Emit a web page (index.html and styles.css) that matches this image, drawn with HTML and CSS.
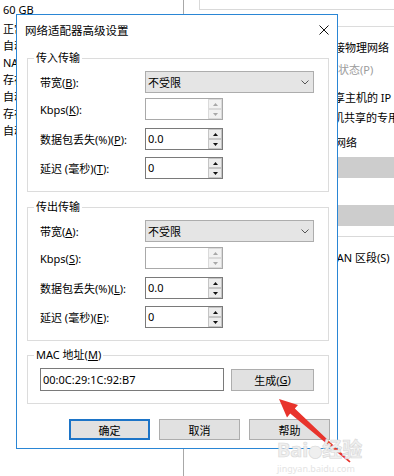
FILE: index.html
```html
<!DOCTYPE html>
<html lang="zh-CN">
<head>
    <meta charset="UTF-8">
    <title>网络适配器高级设置</title>
    <link rel="stylesheet" href="styles.css">
</head>
<body>
<div class="desk">
    <!-- 背后的虚拟机设置窗口 -->
    <div class="side-list">
        <div class="first">60 GB</div>
        <div>正常</div>
        <div>自动</div>
        <div>NAT</div>
        <div>存在</div>
        <div>自动</div>
        <div>存在</div>
        <div>自动</div>
    </div>
    <div class="split"></div>
    <div class="pane">
        <div class="pane-top"></div>
        <div class="pane-box">
            <div class="l1">连接物理网络</div>
            <div class="l2">连接状态(P)</div>
            <div class="l3">共享主机的 IP</div>
            <div class="l4">主机共享的专用</div>
            <div class="l5">虚拟网络</div>
            <div class="bar"></div>
            <div class="bar bar2"></div>
            <div class="pane-line"></div>
            <div class="lan">LAN 区段(S)</div>
        </div>
    </div>

    <!-- 对话框 -->
    <div class="dialog">
        <div class="titlebar">
            <span class="title">网络适配器高级设置</span>
            <svg class="close" width="10" height="10" viewBox="0 0 10 10"><path d="M0.5 0.5L9.5 9.5M9.5 0.5L0.5 9.5"/></svg>
        </div>
        <div class="dialog-body">
            <div class="group">
                <span class="group-title">传入传输</span>
                <div class="row">
                    <span class="label">带宽(<u>B</u>):</span>
                    <div class="combo"><span>不受限</span><svg width="8" height="5" viewBox="0 0 8 5"><path d="M0.5 0.5L4 4L7.5 0.5"/></svg></div>
                </div>
                <div class="row row-2">
                    <span class="label">Kbps(<u>K</u>):</span>
                    <div class="spin off">
                        <span class="spin-val"></span>
                        <span class="spin-btns">
                            <span class="spin-btn"><svg width="5" height="3" viewBox="0 0 5 3"><path d="M0 3L2.5 0L5 3z"/></svg></span>
                            <span class="spin-btn"><svg width="5" height="3" viewBox="0 0 5 3"><path d="M0 0L5 0L2.5 3z"/></svg></span>
                        </span>
                    </div>
                </div>
                <div class="row row-3">
                    <span class="label">数据包丢失(%)(<u>P</u>):</span>
                    <div class="spin">
                        <span class="spin-val">0.0</span>
                        <span class="spin-btns">
                            <span class="spin-btn"><svg width="5" height="3" viewBox="0 0 5 3"><path d="M0 3L2.5 0L5 3z"/></svg></span>
                            <span class="spin-btn"><svg width="5" height="3" viewBox="0 0 5 3"><path d="M0 0L5 0L2.5 3z"/></svg></span>
                        </span>
                    </div>
                </div>
                <div class="row row-4">
                    <span class="label">延迟 (毫秒)(<u>T</u>):</span>
                    <div class="spin">
                        <span class="spin-val">0</span>
                        <span class="spin-btns">
                            <span class="spin-btn"><svg width="5" height="3" viewBox="0 0 5 3"><path d="M0 3L2.5 0L5 3z"/></svg></span>
                            <span class="spin-btn"><svg width="5" height="3" viewBox="0 0 5 3"><path d="M0 0L5 0L2.5 3z"/></svg></span>
                        </span>
                    </div>
                </div>
            </div>

            <div class="group group-out">
                <span class="group-title">传出传输</span>
                <div class="row">
                    <span class="label">带宽(<u>A</u>):</span>
                    <div class="combo"><span>不受限</span><svg width="8" height="5" viewBox="0 0 8 5"><path d="M0.5 0.5L4 4L7.5 0.5"/></svg></div>
                </div>
                <div class="row row-2">
                    <span class="label">Kbps(<u>S</u>):</span>
                    <div class="spin off">
                        <span class="spin-val"></span>
                        <span class="spin-btns">
                            <span class="spin-btn"><svg width="5" height="3" viewBox="0 0 5 3"><path d="M0 3L2.5 0L5 3z"/></svg></span>
                            <span class="spin-btn"><svg width="5" height="3" viewBox="0 0 5 3"><path d="M0 0L5 0L2.5 3z"/></svg></span>
                        </span>
                    </div>
                </div>
                <div class="row row-3">
                    <span class="label">数据包丢失(%)(<u>L</u>):</span>
                    <div class="spin">
                        <span class="spin-val">0.0</span>
                        <span class="spin-btns">
                            <span class="spin-btn"><svg width="5" height="3" viewBox="0 0 5 3"><path d="M0 3L2.5 0L5 3z"/></svg></span>
                            <span class="spin-btn"><svg width="5" height="3" viewBox="0 0 5 3"><path d="M0 0L5 0L2.5 3z"/></svg></span>
                        </span>
                    </div>
                </div>
                <div class="row row-4">
                    <span class="label">延迟 (毫秒)(<u>E</u>):</span>
                    <div class="spin">
                        <span class="spin-val">0</span>
                        <span class="spin-btns">
                            <span class="spin-btn"><svg width="5" height="3" viewBox="0 0 5 3"><path d="M0 3L2.5 0L5 3z"/></svg></span>
                            <span class="spin-btn"><svg width="5" height="3" viewBox="0 0 5 3"><path d="M0 0L5 0L2.5 3z"/></svg></span>
                        </span>
                    </div>
                </div>
            </div>

            <div class="group group-mac">
                <span class="group-title">MAC 地址(<u>M</u>)</span>
                <div class="mac-row">
                    <div class="mac-box">00:0C:29:1C:92:B7</div>
                    <div class="btn btn-gen">生成(<u>G</u>)</div>
                </div>
            </div>

            <div class="actions">
                <div class="btn btn-default">确定</div>
                <div class="btn">取消</div>
                <div class="btn">帮助</div>
            </div>
        </div>
    </div>

    <!-- 红色箭头 -->
    <svg class="arrow" width="394" height="476" viewBox="0 0 394 476">
        <polygon points="279,399 298,405 294.8,408.4 350.6,461.4 349.4,462.6 290.2,413.6 287,417.5"/>
    </svg>
    <div class="watermark">
        <div class="wm-big">Bai<span class="wm-paw">●</span>经验</div>
        <div class="wm-small">jingyan.baidu.com</div>
    </div>
</div>
</body>
</html>
```

FILE: styles.css
```css
*{
    margin:0;
    padding:0;
    box-sizing:border-box;
}
body{
    width:394px;
    height:476px;
    overflow:hidden;
    background:#fff;
    font-family:"Noto Sans","Noto Sans CJK SC",sans-serif;
    font-size:11px;
    color:#000;
}
u{
    text-decoration:underline;
    text-underline-offset:1px;
}
.desk{
    position:relative;
    width:394px;
    height:476px;
    overflow:hidden;
}

/* 背后的窗口 */
.side-list{
    position:absolute;
    left:3px;
    top:1px;
    line-height:17px;
    white-space:nowrap;
}
.side-list .first{
    margin-bottom:2px;
}
.split{
    position:absolute;
    left:183px;
    top:0;
    width:1px;
    height:476px;
    background:#a8a8a8;
}
.pane{
    position:absolute;
    left:199px;
    top:0;
    width:195px;
    height:476px;
    overflow:hidden;
}
.pane-top{
    height:10px;
    border-left:1px solid #d9d9d9;
    border-bottom:1px solid #d9d9d9;
}
.pane-box{
    margin-top:16px;
    border-top:1px solid #dcdcdc;
    padding-top:11px;
    line-height:20px;
    white-space:nowrap;
}
.l1{padding-left:124px;}
.l2{margin-top:2px;padding-left:117px;color:#9c9c9c;}
.l3{margin-top:8px;padding-left:124px;}
.l4{padding-left:123px;}
.l5{margin-top:5px;padding-left:114px;}
.bar{
    margin-top:4px;
    margin-left:100px;
    height:21px;
    background:#cdcdcd;
}
.bar2{margin-top:27px;}
.pane-line{
    margin-top:10px;
    margin-left:100px;
    height:1px;
    background:#d9d9d9;
}
.lan{margin-top:11px;padding-left:132px;}

/* 对话框 */
.dialog{
    position:absolute;
    left:16px;
    top:14px;
    width:322px;
    height:435px;
    border:1px solid #2a86d5;
    background:#fff;
    display:flex;
    flex-direction:column;
}
.titlebar{
    height:29px;
    display:flex;
    align-items:center;
    justify-content:space-between;
    padding:0 8px;
}
.title{
    font-size:11.5px;
}
.close path{
    stroke:#111;
    stroke-width:1;
    fill:none;
}
.dialog-body{
    padding:14px 8px 8px 10px;
    display:flex;
    flex-direction:column;
}
.group{
    position:relative;
    border:1px solid #dcdcdc;
    padding:12px 0 12px 12px;
}
.group-out{margin-top:15px;}
.group-mac{margin-top:14px;}
.group-title{
    position:absolute;
    top:-9px;
    left:6px;
    padding:0 2px;
    background:#fff;
    line-height:16px;
    white-space:nowrap;
}
.row{
    display:flex;
    align-items:center;
    height:22px;
}
.row-2{margin-top:5px;}
.row-3{margin-top:8px;}
.row-4{margin-top:7px;}
.label{
    width:105px;
    white-space:nowrap;
}
.combo{
    width:169px;
    height:22px;
    border:1px solid #adadad;
    background:#e5e5e5;
    display:flex;
    align-items:center;
    justify-content:space-between;
    padding:0 4px 0 2px;
}
.combo path{
    stroke:#555;
    stroke-width:1;
    fill:none;
}
.spin{
    width:78px;
    height:22px;
    border:1px solid #7a7a7a;
    display:flex;
    background:#fff;
}
.spin-val{
    flex:1;
    padding-left:2px;
    line-height:20px;
}
.spin-btns{
    width:14px;
    display:flex;
    flex-direction:column;
}
.spin-btn{
    flex:1;
    border:1px solid #c4c4c4;
    background:#ececec;
    display:flex;
    align-items:center;
    justify-content:center;
}
.spin-btn svg{
    fill:#111;
}
.spin.off{
    border-color:#a9a9a9;
}
.spin.off .spin-btn{
    background:#f2f2f2;
    border-color:#dadada;
}
.spin.off .spin-btn svg{
    fill:#a8a8a8;
}
.mac-row{
    display:flex;
    align-items:center;
}
.mac-box{
    width:184px;
    height:23px;
    border:1px solid #7a7a7a;
    padding-left:2px;
    line-height:21px;
}
.btn{
    height:21px;
    border:1px solid #adadad;
    background:#e1e1e1;
    display:flex;
    align-items:center;
    justify-content:center;
    white-space:nowrap;
}
.btn-gen{
    margin-left:7px;
    width:83px;
    height:22px;
}
.actions{
    margin-top:15px;
    margin-right:-1px;
    display:flex;
    justify-content:flex-end;
    gap:9px;
}
.actions .btn{
    width:81px;
}
.btn-default{
    border:2px solid #1c74c7;
}

/* 箭头和水印 */
.arrow{
    position:absolute;
    left:0;
    top:0;
    pointer-events:none;
}
.arrow polygon{
    fill:#e8342c;
}
.watermark{
    position:absolute;
    left:277px;
    top:438px;
    color:#efefef;
    white-space:nowrap;
    pointer-events:none;
}
.wm-big{
    font-size:20px;
    font-weight:bold;
    line-height:24px;
    -webkit-text-stroke:0.6px #d8d8d8;
}
.wm-paw{
    font-size:14px;
}
.wm-small{
    font-size:9px;
    line-height:10px;
    color:#e4e4e4;
}
```
